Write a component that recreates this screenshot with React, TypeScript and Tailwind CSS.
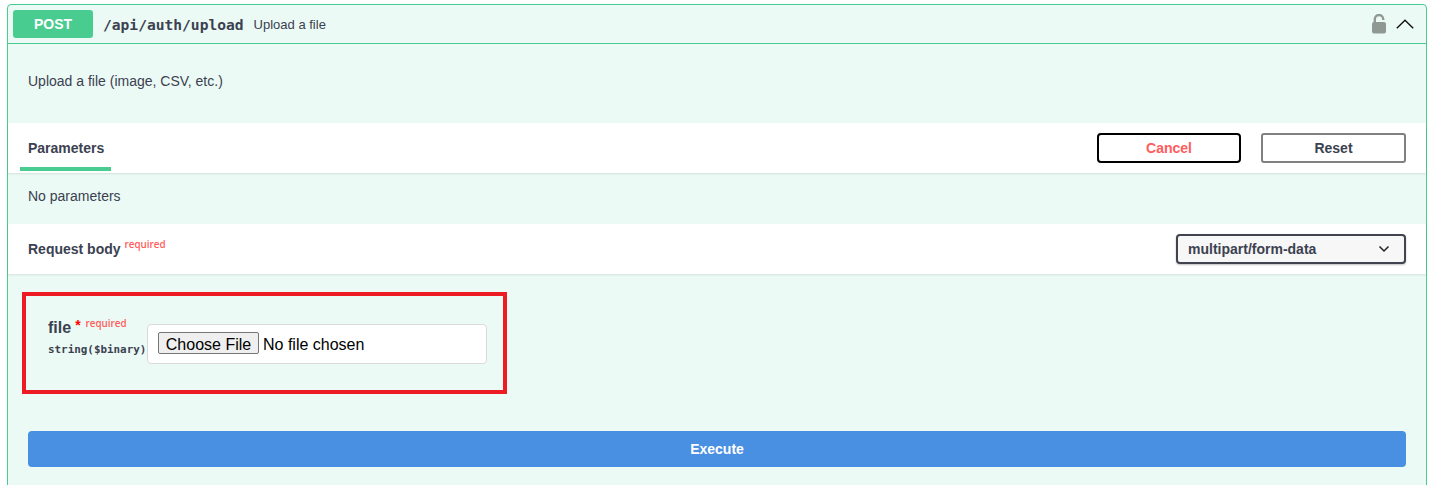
import React from 'react';

const App = () => {
  return (
    <div className="h-[485px] overflow-hidden bg-white pl-[7px] pr-[6px] pt-1 font-['Liberation_Sans',sans-serif] text-[#3b4151]">
      <div className="h-[500px] rounded-t-[4px] border border-[#49cc90] bg-[#ebfaf4]">
        <div className="flex h-[39px] items-center border-b border-[#49cc90] pl-[5px] pr-[12px]">
          <div className="flex h-[28px] w-[80px] items-center justify-center rounded-[3px] bg-[#49cc90] text-[14px] font-bold text-white">POST</div>
          <span className="ml-[10px] mt-[2px] font-['DejaVu_Sans_Mono',monospace] text-[14.6px] font-bold">/api/auth/upload</span>
          <span className="ml-[10px] mt-[2px] text-[13px]">Upload a file</span>
          <div className="ml-auto flex items-center gap-[9px]">
            <svg width="16" height="20" viewBox="0 0 16 20" fill="none">
              <path d="M3.8 9V5.2a4.2 4.2 0 0 1 8.4 0V6" stroke="#8f9892" strokeWidth="2.4" />
              <rect x="1" y="8" width="14" height="11.5" rx="2" fill="#8f9892" />
            </svg>
            <svg width="18" height="10" viewBox="0 0 18 10" fill="none">
              <path d="M0.8 9.2 9 1.2l8.2 8" stroke="#111" strokeWidth="1.4" />
            </svg>
          </div>
        </div>

        <div className="flex h-[79px] items-center pb-[4px] pl-5 text-[14px]">Upload a file (image, CSV, etc.)</div>

        <div className="flex h-[50px] items-center justify-between bg-white pl-3 pr-5 shadow-[0_1px_2px_rgba(0,0,0,0.1)]">
          <div className="flex h-[48px] w-[91px] self-start border-b-[4px] border-[#49cc90] pl-2 pt-[15px] text-[14px] font-bold">Parameters</div>
          <div className="flex gap-5">
            <button className="h-[30px] w-[144px] rounded-[4px] border-2 border-black text-[14px] font-bold text-[#ff5c5c]">Cancel</button>
            <button className="h-[30px] w-[145px] rounded-[3px] border-2 border-[#808080] text-[14px] font-bold">Reset</button>
          </div>
        </div>

        <div className="flex h-[51px] items-center pb-[5px] pl-5 text-[14px]">No parameters</div>

        <div className="flex h-[50px] items-center justify-between bg-white pl-5 pr-5 shadow-[0_1px_2px_rgba(0,0,0,0.1)]">
          <div className="text-[14px] font-bold">
            Request body
            <span className="relative top-[-6px] ml-[4px] font-['Open_Sans',sans-serif] text-[9.8px] font-semibold text-[#ff5c5c]">required</span>
          </div>
          <div className="flex h-[30px] w-[230px] items-center justify-between rounded-[4px] border-2 border-[#41444e] bg-[#f7f7f7] pl-[10px] pr-[14px] text-[14px] font-bold shadow-[0_1px_2px_rgba(0,0,0,0.25)]">
            multipart/form-data
            <svg width="12" height="8" viewBox="0 0 12 8" fill="none">
              <path d="M1.5 1.5 6 6l4.5-4.5" stroke="#222" strokeWidth="1.5" />
            </svg>
          </div>
        </div>

        <div className="pl-[14px] pr-5 pt-[18px]">
          <div className="flex h-[102px] w-[485px] items-start border-[4px] border-[#ed1c24] pl-[22px]">
            <div className="w-[99px] shrink-0 pt-[22px]">
              <div className="text-[16px] font-bold leading-5">
                file
                <span className="relative top-[-3px] ml-[4px] text-[14px] text-[#ff0000]">*</span>
                <span className="relative top-[-6px] ml-[5px] font-['Open_Sans',sans-serif] text-[9.8px] font-semibold text-[#ff5c5c]">required</span>
              </div>
              <div className="mt-[2px] whitespace-nowrap font-['DejaVu_Sans_Mono',monospace] text-[10.9px] font-bold">string($binary)</div>
            </div>
            <input
              type="file"
              className="mt-[28px] h-[40px] w-[340px] rounded-[4px] border border-[#d9d9d9] bg-white pl-[10px] pt-[7px] text-[16px] text-black file:mr-1 file:h-[22px] file:w-[101px] file:rounded-[2px] file:border file:border-[#767676] file:bg-[#efefef] file:text-[16px]"
            />
          </div>
          <button className="ml-[6px] mt-[37px] h-[36px] w-[1378px] rounded-[4px] bg-[#4990e2] text-[14px] font-bold text-white">Execute</button>
        </div>
      </div>
    </div>
  );
};

export default App;
